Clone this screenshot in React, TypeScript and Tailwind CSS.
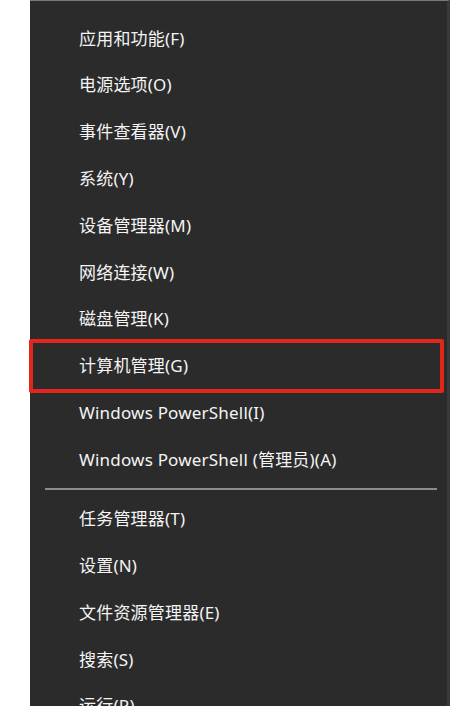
import React from "react";

const top = [
  "应用和功能(F)",
  "电源选项(O)",
  "事件查看器(V)",
  "系统(Y)",
  "设备管理器(M)",
  "网络连接(W)",
  "磁盘管理(K)",
  "计算机管理(G)",
  "Windows PowerShell(I)",
  "Windows PowerShell (管理员)(A)",
];
const bottom = ["任务管理器(T)", "设置(N)", "文件资源管理器(E)", "搜索(S)", "运行(R)"];

function Row({ label, highlight }: { label: string; highlight?: boolean }) {
  return (
    <div className="relative h-[46.8px] flex items-center pl-[49px]">
      {highlight && (
        <div className="absolute left-[-1px] right-[3px] top-[-4px] bottom-[-4px] border-[4px] border-[#e3261c] rounded-[2px]" />
      )}
      <span className="text-[17px] tracking-[0.2px] text-[#f4f4f4] whitespace-nowrap">{label}</span>
    </div>
  );
}

export default function App() {
  return (
    <div
      className="flex w-[450px] h-[706px] overflow-hidden bg-white"
      style={{ fontFamily: '"Noto Sans", "Noto Sans CJK SC", sans-serif' }}
    >
      <div className="w-[30px] bg-white" />
      <div className="flex-1 bg-[#2b2b2b] border-t border-[#7a7a7a] border-r-[3px] border-r-[#3a3a3a] pt-[14px]">
        {top.map((l, i) => (
          <Row key={l} label={l} highlight={i === 7} />
        ))}
        <div className="h-[12.6px] flex items-center pl-[15px] pr-[10px]">
          <div className="h-[2px] w-full bg-[#8c8c8c]" />
        </div>
        {bottom.map((l) => (
          <Row key={l} label={l} />
        ))}
      </div>
    </div>
  );
}
